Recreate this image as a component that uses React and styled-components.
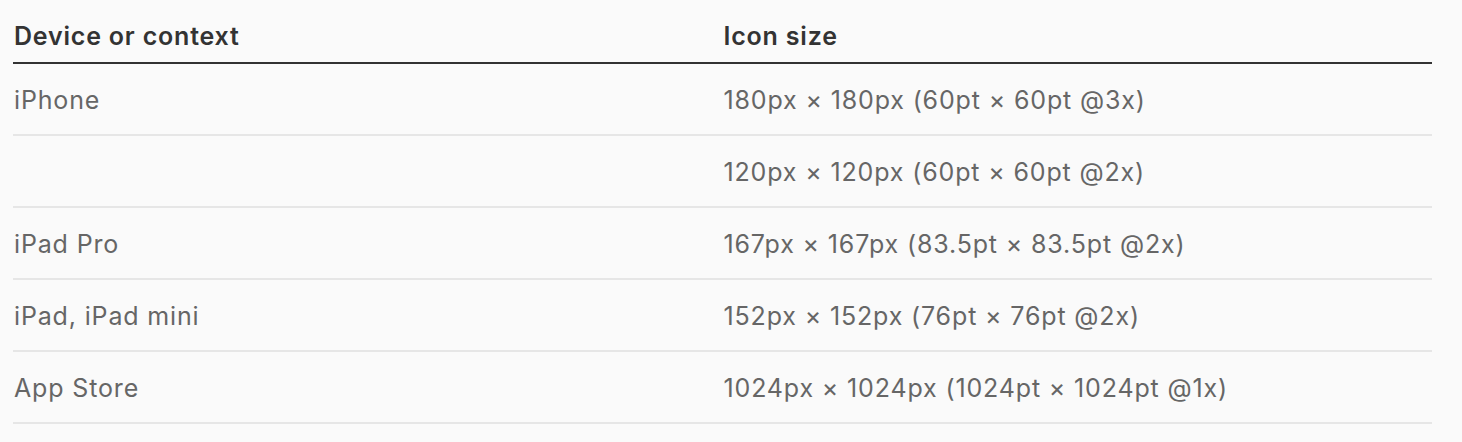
import styled, { createGlobalStyle } from 'styled-components'

const GlobalStyle = createGlobalStyle`
  html, body {
    margin: 0;
    padding: 0;
    background-color: #fafafa;
  }
  body {
    font-family: Inter, "Liberation Sans", sans-serif;
  }
`

const Page = styled.div`
  padding: 0 30px 0 13px;
`

const Table = styled.table`
  width: 100%;
  border-collapse: collapse;
  table-layout: fixed;
`

const HeadCell = styled.th`
  height: 63px;
  padding: 0 0 11px 1px;
  box-sizing: border-box;
  text-align: left;
  vertical-align: bottom;
  font-size: 25px;
  font-weight: 600;
  color: #333333;
  border-bottom: 2px solid #333333;
  letter-spacing: 0.8px;
`

const Cell = styled.td`
  height: 68px;
  padding: 2px 0 0 1px;
  font-size: 25px;
  font-weight: 400;
  color: #666666;
  border-bottom: 2px solid #e6e6e6;
  vertical-align: middle;
  letter-spacing: 0.85px;
`

const rows = [
  ['iPhone', '180px × 180px (60pt × 60pt @3x)'],
  ['', '120px × 120px (60pt × 60pt @2x)'],
  ['iPad Pro', '167px × 167px (83.5pt × 83.5pt @2x)'],
  ['iPad, iPad mini', '152px × 152px (76pt × 76pt @2x)'],
  ['App Store', '1024px × 1024px (1024pt × 1024pt @1x)'],
]

export default function App() {
  return (
    <>
      <GlobalStyle />
      <Page>
        <Table>
          <thead>
            <tr>
              <HeadCell>Device or context</HeadCell>
              <HeadCell>Icon size</HeadCell>
            </tr>
          </thead>
          <tbody>
            {rows.map(([device, size], idx) => (
              <tr key={`row${idx}`}>
                <Cell>{device}</Cell>
                <Cell>{size}</Cell>
              </tr>
            ))}
          </tbody>
        </Table>
      </Page>
    </>
  )
}
